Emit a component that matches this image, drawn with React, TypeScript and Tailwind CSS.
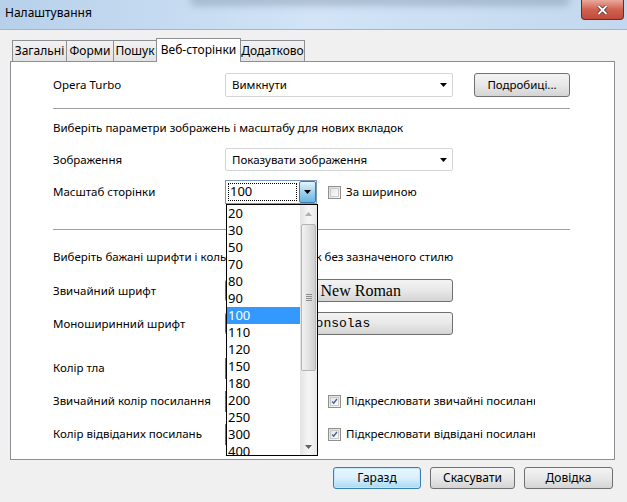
import React from 'react'

const zoomValues = ['20', '30', '50', '70', '80', '90', '100', '110', '120', '150', '180', '200', '250', '300', '400']

function Arrow() {
  return (
    <svg width="7" height="4" viewBox="0 0 7 4">
      <path d="M0 0h7L3.5 4z" fill="#000" />
    </svg>
  )
}

function Checkbox({ checked }: { checked?: boolean }) {
  return (
    <span className="flex h-[13px] w-[13px] items-center justify-center border border-[#8f8f8f] bg-linear-to-br from-[#dcdcdc] to-[#fafafa]">
      <span className="flex h-[9px] w-[9px] items-center justify-center border border-[#c9c9c9] bg-linear-to-br from-[#e6e6e6] to-[#fdfdfd]">
        {checked && (
          <svg width="9" height="9" viewBox="0 0 9 9">
            <path d="M1.5 4.5l2 2.2L7.6 1.3" stroke="#4a5f97" strokeWidth="1.8" fill="none" />
          </svg>
        )}
      </span>
    </span>
  )
}

function Select({ value }: { value: string }) {
  return (
    <div className="flex h-full w-[228px] items-center justify-between rounded-[2px] border border-[#d5d5d5] bg-white pl-[6px] pr-[5px]">
      <span>{value}</span>
      <Arrow />
    </div>
  )
}

function Button({ children, className = '' }: { children: React.ReactNode; className?: string }) {
  return (
    <div
      className={
        'flex items-center justify-center rounded-[3px] border border-[#707070] bg-linear-to-b from-[#f3f3f3] via-[#e8e8e8] to-[#d4d4d4] ' +
        className
      }
    >
      {children}
    </div>
  )
}

function Row({ label, className = '', children }: { label: string; className?: string; children?: React.ReactNode }) {
  return (
    <div className={'flex items-center ' + className}>
      <div className="w-[172px] shrink-0">{label}</div>
      {children}
    </div>
  )
}

function Dropdown() {
  return (
    <div className="absolute left-[215px] top-[142px] z-20 flex h-[252px] w-[92px] border border-black bg-white">
      <div className="flex-1 overflow-hidden text-[13px] leading-[17px] font-['Noto_Sans',sans-serif]">
        {zoomValues.map((v) => (
          <div key={v} className={v === '100' ? 'h-[17px] bg-[#3399ff] pl-[1px] text-white' : 'h-[17px] pl-[1px] text-black'}>
            {v}
          </div>
        ))}
      </div>
      <div className="flex w-[17px] flex-col bg-linear-to-r from-[#e3e3e3] via-[#f5f5f5] to-[#e8e8e8]">
        <div className="flex h-[17px] items-center justify-center">
          <svg width="7" height="4" viewBox="0 0 7 4">
            <path d="M0 4h7L3.5 0z" fill="#b0b0b0" />
          </svg>
        </div>
        <div className="mx-[1px] mt-[2px] flex h-[147px] items-center justify-center rounded-[2px] border border-[#b5b5b5] bg-linear-to-r from-[#f2f2f2] via-[#e2e2e2] to-[#cfcfcf]">
          <div className="flex flex-col gap-[1px]">
            <div className="h-px w-[6px] bg-[#8c8c8c]" />
            <div className="h-px w-[6px] bg-[#8c8c8c]" />
            <div className="h-px w-[6px] bg-[#8c8c8c]" />
            <div className="h-px w-[6px] bg-[#8c8c8c]" />
          </div>
        </div>
        <div className="flex-1" />
        <div className="flex h-[17px] items-center justify-center">
          <svg width="7" height="4" viewBox="0 0 7 4">
            <path d="M0 0h7L3.5 4z" fill="#606060" />
          </svg>
        </div>
      </div>
    </div>
  )
}

export default function App() {
  return (
    <div className="relative h-[502px] w-[627px] overflow-hidden bg-[#f0f0f0] text-[11.5px] text-black font-['Noto_Sans',sans-serif]">
      {/* title bar */}
      <div className="relative flex h-[30px] items-center border-b border-[#9fb6cf] bg-linear-to-r from-[#b7d0ea] via-[#d2e4f6] to-[#c3d8ee] pl-[5px]">
        <div className="absolute left-[190px] top-[-4px] h-[9px] w-[380px] rounded-full bg-[#4a5d75] opacity-35 blur-[4px]" />
        <span className="relative pb-[4px] text-[12px]">Налаштування</span>
        <div className="absolute right-[3px] top-0 flex h-[20px] w-[43px] items-center justify-center rounded-b-[4px] border border-t-0 border-[#6b2a2a] bg-linear-to-b from-[#e9a99c] via-[#d0624f] to-[#c04a3a]">
          <svg width="11" height="10" viewBox="0 0 11 10">
            <path d="M1.5 1l8 8M9.5 1l-8 8" stroke="#3a1a1a" strokeWidth="3.2" />
            <path d="M1.5 1l8 8M9.5 1l-8 8" stroke="#fff" strokeWidth="2" />
          </svg>
        </div>
      </div>

      {/* tabs */}
      <div className="ml-[12px] mt-[8px] flex h-[23px] items-end">
        {[
          ['Загальні', 'w-[55px]'],
          ['Форми', 'w-[48px]'],
          ['Пошук', 'w-[44px]'],
        ].map(([t, w]) => (
          <div
            key={t}
            className={
              'flex h-[21px] items-center justify-center border border-b-0 border-[#8c8e94] bg-linear-to-b from-[#f2f2f2] to-[#e3e3e3] text-[12px] -mr-px ' + w
            }
          >
            {t}
          </div>
        ))}
        <div className="relative z-10 -mb-px flex h-[24px] w-[85px] items-center justify-center border border-b-0 border-[#8c8e94] bg-white pb-[2px] text-[12px]">
          Веб-сторінки
        </div>
        <div className="-ml-px flex h-[21px] w-[65px] items-center justify-center border border-b-0 border-[#8c8e94] bg-linear-to-b from-[#f2f2f2] to-[#e3e3e3] text-[12px]">
          Додатково
        </div>
      </div>

      {/* panel */}
      <div className="relative ml-[10px] h-[399px] w-[605px] border border-[#8c8e94] bg-white pl-[42px]">
        <Row label="Opera Turbo" className="mt-[11px] h-[24px]">
          <Select value="Вимкнути" />
          <Button className="ml-[21px] h-[24px] w-[96px]">Подробиці...</Button>
        </Row>
        <div className="mt-[11px] h-px w-[517px] bg-[#a0a0a0]" />
        <div className="mt-[9px] flex h-[20px] items-center">Виберіть параметри зображень і масштабу для нових вкладок</div>
        <Row label="Зображення" className="mt-[10px] h-[23px]">
          <Select value="Показувати зображення" />
        </Row>
        <Row label="Масштаб сторінки" className="mt-[9px] h-[24px]">
          <div className="flex h-full w-[92px] border border-[#7a99b8] bg-white">
            <div className="m-[2px] flex flex-1 items-center border border-dotted border-black pl-px text-[13px]">100</div>
            <div className="flex w-[17px] items-center justify-center rounded-[2px] border border-[#3d7bad] bg-linear-to-b from-[#e5f4fc] via-[#9fd2ef] to-[#6ab5e0]">
              <Arrow />
            </div>
          </div>
          <div className="ml-[11px]">
            <Checkbox />
          </div>
          <span className="ml-[5px]">За шириною</span>
        </Row>
        <div className="mt-[25px] h-px w-[517px] bg-[#a0a0a0]" />
        <div className="mt-[17px] flex h-[20px] items-center">
          Виберіть бажані шрифти і кольори для сторінок без зазначеного стилю
        </div>
        <Row label="Звичайний шрифт" className="mt-[12px] h-[23px]">
          <Button className="h-full w-[228px] text-[16px] font-['Liberation_Serif',serif]">Times New Roman</Button>
        </Row>
        <Row label="Моноширинний шрифт" className="mt-[10px] h-[23px]">
          <Button className="h-full w-[228px] text-[13px] font-['Liberation_Mono',monospace]">Consolas</Button>
        </Row>
        <Row label="Колір тла" className="mt-[22px] h-[22px]">
          <div className="h-[21px] w-[60px] border border-[#707070] bg-white" />
        </Row>
        <Row label="Звичайний колір посилання" className="mt-[11px] h-[22px]">
          <div className="h-[21px] w-[60px] border border-[#707070] bg-[#0000ee]" />
          <div className="ml-[43px]">
            <Checkbox checked />
          </div>
          <span className="ml-[5px] w-[189px] overflow-hidden whitespace-nowrap">Підкреслювати звичайні посилання</span>
        </Row>
        <Row label="Колір відвіданих посилань" className="mt-[11px] h-[22px]">
          <div className="h-[21px] w-[60px] border border-[#707070] bg-[#551a8b]" />
          <div className="ml-[43px]">
            <Checkbox checked />
          </div>
          <span className="ml-[5px] w-[189px] overflow-hidden whitespace-nowrap">Підкреслювати відвідані посилання</span>
        </Row>
        <Dropdown />
      </div>

      {/* buttons */}
      <div className="mt-[7px] flex justify-end gap-[9px] pr-[14px] text-[12px]">
        <div className="flex h-[22px] w-[88px] items-center justify-center rounded-[3px] border border-[#3c7fb1] bg-linear-to-b from-[#eaf6fd] via-[#d9f0fc] to-[#a7d9f5] shadow-[inset_0_0_0_1px_#c2e6fa]">
          Гаразд
        </div>
        <Button className="h-[22px] w-[85px]">Скасувати</Button>
        <Button className="h-[22px] w-[89px]">Довідка</Button>
      </div>
    </div>
  )
}
